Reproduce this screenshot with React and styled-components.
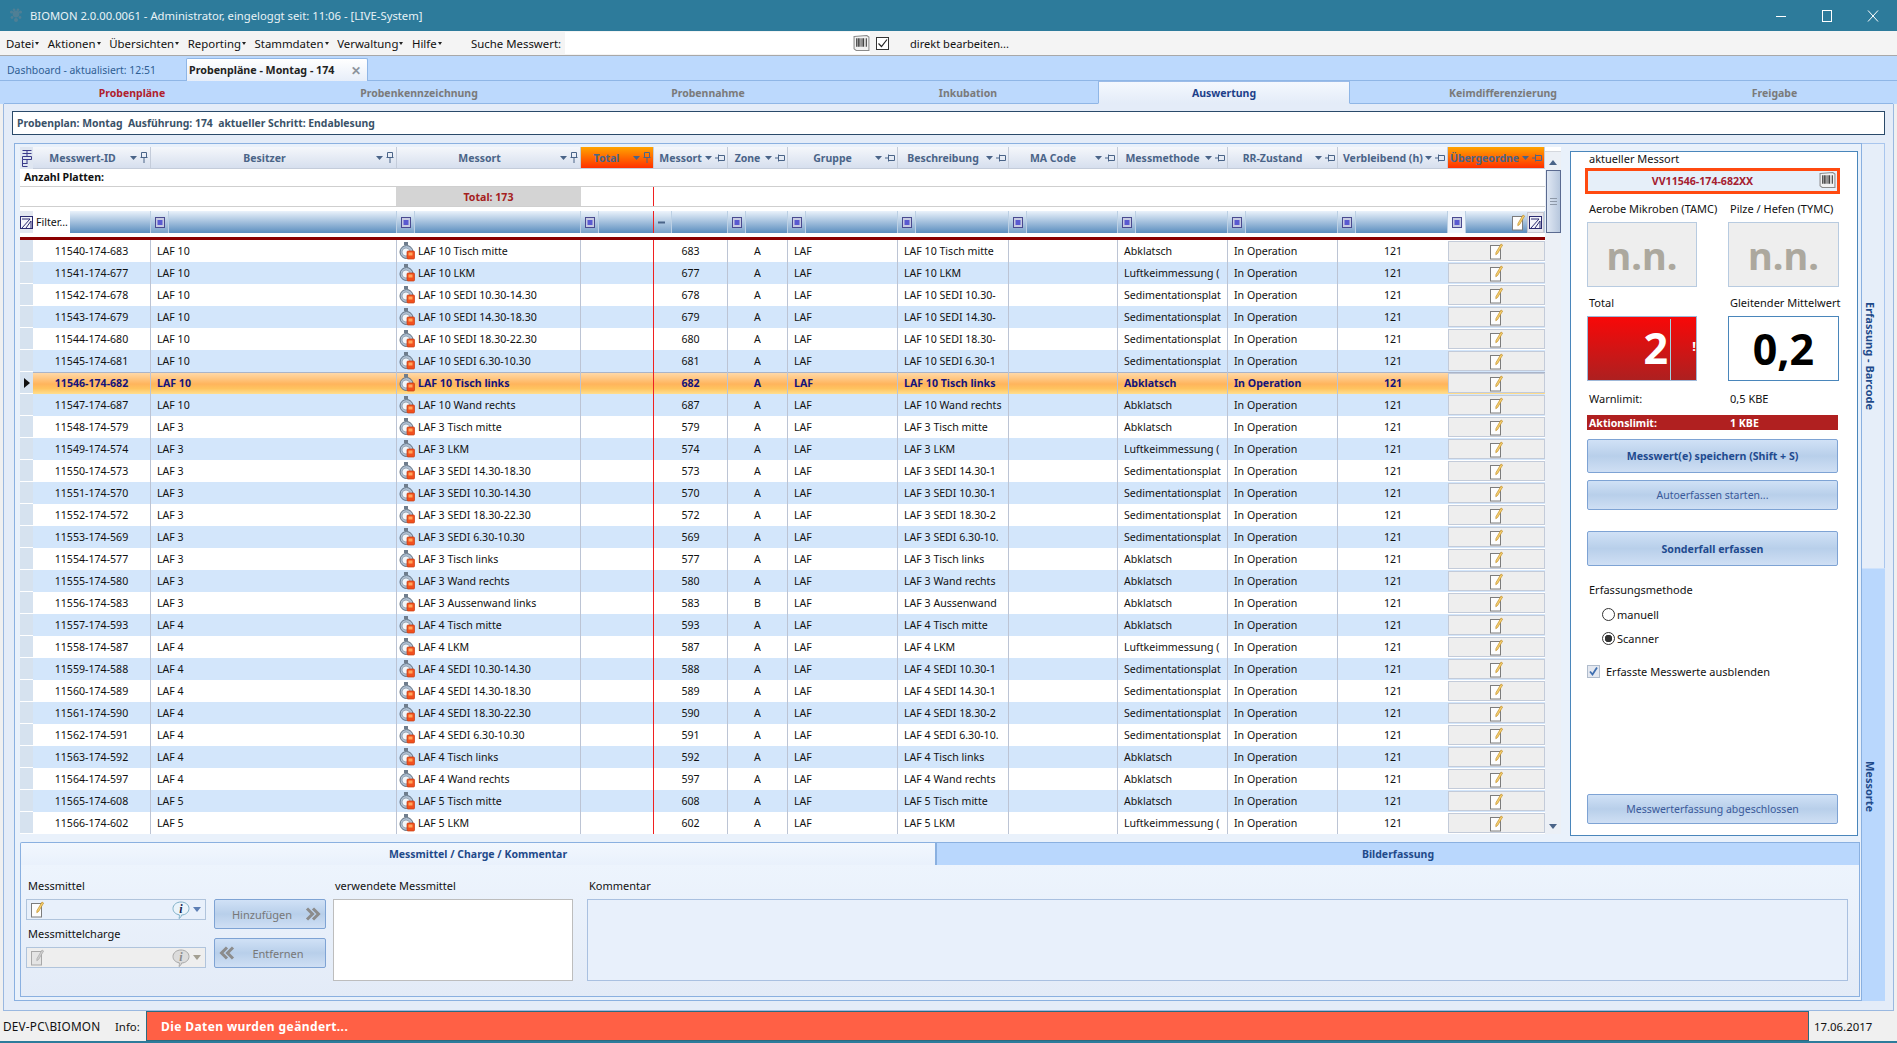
import styled, { createGlobalStyle } from "styled-components";

const UI_FONT = '"Noto Sans", "Liberation Sans", Arial, sans-serif';
const COLS = "13px 118px 246px 184px 73px 74px 60px 110px 111px 109px 110px 110px 110px 97px";

const METHODS = { T: "Abklatsch", L: "Luftkeimmessung (", S: "Sedimentationsplat" };

// id, besitzer, messort, nummer, zone, beschreibung, methode
const MESSWERTE = [
  ["11540-174-683", "LAF 10", "LAF 10 Tisch mitte", "683", "A", "LAF 10 Tisch mitte", "T"],
  ["11541-174-677", "LAF 10", "LAF 10 LKM", "677", "A", "LAF 10 LKM", "L"],
  ["11542-174-678", "LAF 10", "LAF 10 SEDI 10.30-14.30", "678", "A", "LAF 10 SEDI 10.30-", "S"],
  ["11543-174-679", "LAF 10", "LAF 10 SEDI 14.30-18.30", "679", "A", "LAF 10 SEDI 14.30-", "S"],
  ["11544-174-680", "LAF 10", "LAF 10 SEDI 18.30-22.30", "680", "A", "LAF 10 SEDI 18.30-", "S"],
  ["11545-174-681", "LAF 10", "LAF 10 SEDI 6.30-10.30", "681", "A", "LAF 10 SEDI 6.30-1", "S"],
  ["11546-174-682", "LAF 10", "LAF 10 Tisch links", "682", "A", "LAF 10 Tisch links", "T"],
  ["11547-174-687", "LAF 10", "LAF 10 Wand rechts", "687", "A", "LAF 10 Wand rechts", "T"],
  ["11548-174-579", "LAF 3", "LAF 3 Tisch mitte", "579", "A", "LAF 3 Tisch mitte", "T"],
  ["11549-174-574", "LAF 3", "LAF 3 LKM", "574", "A", "LAF 3 LKM", "L"],
  ["11550-174-573", "LAF 3", "LAF 3 SEDI 14.30-18.30", "573", "A", "LAF 3 SEDI 14.30-1", "S"],
  ["11551-174-570", "LAF 3", "LAF 3 SEDI 10.30-14.30", "570", "A", "LAF 3 SEDI 10.30-1", "S"],
  ["11552-174-572", "LAF 3", "LAF 3 SEDI 18.30-22.30", "572", "A", "LAF 3 SEDI 18.30-2", "S"],
  ["11553-174-569", "LAF 3", "LAF 3 SEDI 6.30-10.30", "569", "A", "LAF 3 SEDI 6.30-10.", "S"],
  ["11554-174-577", "LAF 3", "LAF 3 Tisch links", "577", "A", "LAF 3 Tisch links", "T"],
  ["11555-174-580", "LAF 3", "LAF 3 Wand rechts", "580", "A", "LAF 3 Wand rechts", "T"],
  ["11556-174-583", "LAF 3", "LAF 3 Aussenwand links", "583", "B", "LAF 3 Aussenwand", "T"],
  ["11557-174-593", "LAF 4", "LAF 4 Tisch mitte", "593", "A", "LAF 4 Tisch mitte", "T"],
  ["11558-174-587", "LAF 4", "LAF 4 LKM", "587", "A", "LAF 4 LKM", "L"],
  ["11559-174-588", "LAF 4", "LAF 4 SEDI 10.30-14.30", "588", "A", "LAF 4 SEDI 10.30-1", "S"],
  ["11560-174-589", "LAF 4", "LAF 4 SEDI 14.30-18.30", "589", "A", "LAF 4 SEDI 14.30-1", "S"],
  ["11561-174-590", "LAF 4", "LAF 4 SEDI 18.30-22.30", "590", "A", "LAF 4 SEDI 18.30-2", "S"],
  ["11562-174-591", "LAF 4", "LAF 4 SEDI 6.30-10.30", "591", "A", "LAF 4 SEDI 6.30-10.", "S"],
  ["11563-174-592", "LAF 4", "LAF 4 Tisch links", "592", "A", "LAF 4 Tisch links", "T"],
  ["11564-174-597", "LAF 4", "LAF 4 Wand rechts", "597", "A", "LAF 4 Wand rechts", "T"],
  ["11565-174-608", "LAF 5", "LAF 5 Tisch mitte", "608", "A", "LAF 5 Tisch mitte", "T"],
  ["11566-174-602", "LAF 5", "LAF 5 LKM", "602", "A", "LAF 5 LKM", "L"],
];

const COLUMNS = [
  { title: "Messwert-ID", pin: "v" },
  { title: "Besitzer", pin: "v" },
  { title: "Messort", pin: "v" },
  { title: "Total", pin: "v", hot: true },
  { title: "Messort", pin: "h" },
  { title: "Zone", pin: "h" },
  { title: "Gruppe", pin: "h" },
  { title: "Beschreibung", pin: "h" },
  { title: "MA Code", pin: "h" },
  { title: "Messmethode", pin: "h" },
  { title: "RR-Zustand", pin: "h" },
  { title: "Verbleibend (h)", pin: "h" },
  { title: "Übergeordne", pin: "h", hot: true },
];

const MENU = ["Datei", "Aktionen", "Übersichten", "Reporting", "Stammdaten", "Verwaltung", "Hilfe"];

const STEPS = [
  { label: "Probenpläne", width: 256, tone: "#b0202c" },
  { label: "Probenkennzeichnung", width: 318 },
  { label: "Probennahme", width: 260 },
  { label: "Inkubation", width: 260 },
  { label: "Auswertung", width: 252, active: true },
  { label: "Keimdifferenzierung", width: 306 },
  { label: "Freigabe", width: 237 },
];

const LogoIcon = () => (
  <svg width="14" height="16" viewBox="0 0 14 16">
    <g fill="#4f7f95">
      <circle cx="7" cy="6" r="3.4" />
      <circle cx="2.5" cy="4" r="1.6" />
      <circle cx="11.5" cy="4" r="1.6" />
      <circle cx="5" cy="1.8" r="1.3" />
      <circle cx="9" cy="1.8" r="1.3" />
      <circle cx="3" cy="9.5" r="1.4" />
      <circle cx="11" cy="9.5" r="1.4" />
      <circle cx="7" cy="12" r="2" />
    </g>
  </svg>
);

const WindowIcon = ({ type }) => (
  <svg width="12" height="12" viewBox="0 0 12 12" fill="none" stroke="#fff" strokeWidth="1">
    {type === "min" && <path d="M1 6.5h10" />}
    {type === "max" && <rect x="1.5" y="0.5" width="9" height="11" />}
    {type === "close" && <path d="M1 .5l10 11M11 .5L1 11.5" />}
  </svg>
);

const BarcodeIcon = ({ size = 17 }) => (
  <svg width={size} height={size} viewBox="0 0 16 16">
    <path d="M1 1.5l12-1 2 1.5v12.5H3l-2-1.5z" fill="#f2f2f2" stroke="#8a8a8a" />
    <path d="M3.5 3v8M5 3v8M6.5 3v8M8.5 3v8M10 3v8M12.5 3v8" stroke="#333" strokeWidth="1" />
  </svg>
);

const SortArrow = () => (
  <svg width="7" height="4" viewBox="0 0 7 4">
    <path d="M0 0h7L3.5 4z" fill="#4a6488" />
  </svg>
);

const PinIcon = ({ dir }) =>
  dir === "v" ? (
    <svg width="8" height="11" viewBox="0 0 8 11" fill="none" stroke="#4a6488">
      <path d="M1.5.5h5v5h-5zM.5 5.5h7M4 6v5" />
    </svg>
  ) : (
    <svg width="10" height="8" viewBox="0 0 10 8" fill="none" stroke="#4a6488">
      <path d="M3.5 1.5h6v5h-6zM3.5.5v7M0 4h3.5" />
    </svg>
  );

const ColumnChooser = () => (
  <svg width="12" height="17" viewBox="0 0 12 17" fill="none" stroke="#3a3a8a">
    <path d="M1.5.5h9M6 .5v6M1.5 3.5h9M1.5 6.5h9v3h-9zM6 9.5v4M1.5 13.5h5M1.5 16.5h5M1.5 9.5v7" />
  </svg>
);

const FilterBox = () => (
  <svg width="10" height="11" viewBox="0 0 10 11">
    <rect x=".5" y=".5" width="9" height="10" fill="#c6cae2" stroke="#4a4a90" />
    <rect x="2.5" y="3" width="5" height="5" fill="#5a5ad0" />
  </svg>
);

const FilterDash = () => (
  <svg width="11" height="11" viewBox="0 0 11 11">
    <rect x="1" y="4.5" width="7" height="2" fill="#4a6488" />
  </svg>
);

const FilterOff = () => (
  <svg width="13" height="13" viewBox="0 0 13 13" fill="none">
    <rect x=".5" y=".5" width="12" height="12" fill="#f5f5fa" stroke="#2a2a70" />
    <path d="M2 3h8L2 12M6 12l5-7v7" stroke="#2a2a70" />
  </svg>
);

const EditIcon = ({ muted }) => (
  <svg width="16" height="17" viewBox="0 0 16 17">
    <rect x="1.5" y="2.5" width="10" height="13.5" fill={muted ? "#e4e4e4" : "#fdfdfd"} stroke={muted ? "#a8a8a8" : "#7c7c7c"} />
    <path d="M7 9.500l5-8.500 1.600 1L8.600 10.500l-1.800 1.200z" fill={muted ? "#cfcfcf" : "#f9d472"} stroke={muted ? "#a8a8a8" : "#c08d2a"} strokeWidth=".7" />
  </svg>
);

const PlaceIcon = () => (
  <svg width="17" height="18" viewBox="0 0 17 18">
    <rect x="5" y="0" width="4" height="3" fill="#6f7d8d" />
    <circle cx="7.500" cy="10" r="6.500" fill="#aebfd2" stroke="#5f6f80" />
    <circle cx="7" cy="10" r="4" fill="#f2f6fa" stroke="#7f90a2" strokeWidth=".7" />
    <rect x="8" y="9" width="7.500" height="8" rx="1" fill="#f2501e" stroke="#c43d12" strokeWidth=".7" />
    <rect x="9.500" y="10.500" width="4" height="3" fill="#ffa45a" />
  </svg>
);

const InfoBubble = ({ muted }) => (
  <svg width="18" height="18" viewBox="0 0 18 18">
    <path d="M9 1c4.500 0 8 2.800 8 6.500S13.500 14 9.500 14c-.3 1.500-1 2.800-2.500 3.500.5-1.200.5-2.500.3-3.700C3.500 13.200 1 10.800 1 7.500 1 3.800 4.500 1 9 1z" fill={muted ? "#dcdcdc" : "#eaf4fb"} stroke={muted ? "#a8a8a8" : "#7fb0c8"} />
    <text x="9" y="12" textAnchor="middle" fontFamily="Liberation Serif, serif" fontStyle="italic" fontWeight="700" fontSize="12" fill={muted ? "#8a8a8a" : "#16264f"}>i</text>
  </svg>
);

const ComboArrow = ({ muted }) => (
  <svg width="8" height="5" viewBox="0 0 8 5">
    <path d="M0 0h8L4 5z" fill={muted ? "#a39f92" : "#5d7fb5"} />
  </svg>
);

const Chevrons = ({ left }) => (
  <svg width="16" height="14" viewBox="0 0 16 14" fill="none" stroke="#8c8c8c" strokeWidth="3">
    <path d={left ? "M8 1.500L2.500 7 8 12.500M14 1.500L8.500 7l5.500 5.500" : "M2 1.500L7.500 7 2 12.500M8 1.500L13.500 7 8 12.500"} />
  </svg>
);

const CheckMark = () => (
  <svg width="11" height="11" viewBox="0 0 11 11" fill="none" stroke="#3f6fb0" strokeWidth="1.800">
    <path d="M2 5.500l2.500 3L9 1.500" />
  </svg>
);

const App = () => {
  return (
    <>
      <GlobalStyle />
      <Window>
        <TitleBar>
          <LogoIcon />
          <TitleText>BIOMON 2.0.00.0061 - Administrator, eingeloggt seit: 11:06 - [LIVE-System]</TitleText>
          <WindowButtons>
            <WindowIcon type="min" />
            <WindowIcon type="max" />
            <WindowIcon type="close" />
          </WindowButtons>
        </TitleBar>

        <MenuBar>
          <MenuItems>
            {MENU.map(item => (
              <MenuItem key={item}>{item}</MenuItem>
            ))}
          </MenuItems>
          <SearchLabel>Suche Messwert:</SearchLabel>
          <SearchInput>
            <BarcodeIcon />
          </SearchInput>
          <PlainCheck>
            <svg width="11" height="11" viewBox="0 0 11 11" fill="none" stroke="#222" strokeWidth="1.200">
              <path d="M1.500 5.500l3 3L10 1.500" />
            </svg>
          </PlainCheck>
          <EditLabel>direkt bearbeiten...</EditLabel>
        </MenuBar>

        <DocTabs>
          <DocTab>Dashboard - aktualisiert: 12:51</DocTab>
          <ActiveDocTab>
            Probenpläne - Montag - 174
            <CloseMark>✕</CloseMark>
          </ActiveDocTab>
        </DocTabs>

        <StepTabs>
          {STEPS.map(step => (
            <StepTab key={step.label} $width={step.width} $active={step.active} $tone={step.tone}>
              {step.label}
            </StepTab>
          ))}
        </StepTabs>

        <Content>
          <InfoBox>Probenplan: Montag&nbsp; Ausführung: 174&nbsp; aktueller Schritt: Endablesung</InfoBox>
          <Workspace>
            <Frame>
              <TopArea>
                <GridFrame>
                  <GridBody>
                    <HeaderRow>
                      <SelectorHead>
                        <ColumnChooser />
                      </SelectorHead>
                      {COLUMNS.map((col, i) => (
                        <HeaderCell key={i} $hot={col.hot}>
                          <HeaderTitle>{col.title}</HeaderTitle>
                          <SortArrow />
                          <PinIcon dir={col.pin} />
                        </HeaderCell>
                      ))}
                    </HeaderRow>
                    <SummaryRow>Anzahl Platten:</SummaryRow>
                    <TotalRow>
                      <TotalBlank />
                      <TotalCell>Total: 173</TotalCell>
                      <TotalEnd />
                    </TotalRow>
                    <FilterRow>
                      <FilterSelector>
                        <FilterOff />
                      </FilterSelector>
                      {COLUMNS.map((col, i) => (
                        <FilterCell key={i} $red={i === 3}>
                          {i === 0 ? (
                            <FilterText>Filter...</FilterText>
                          ) : (
                            <FilterSlot $light={i === 12}>{i === 4 ? <FilterDash /> : <FilterBox />}</FilterSlot>
                          )}
                          {i === 12 && (
                            <FilterTools>
                              <EditIcon />
                              <FilterToolBox>
                                <FilterOff />
                              </FilterToolBox>
                            </FilterTools>
                          )}
                        </FilterCell>
                      ))}
                    </FilterRow>
                    <RedLine />
                    {MESSWERTE.map((m, i) => {
                      const selected = i === 6;
                      return (
                        <DataRow key={m[0]} $selected={selected} $odd={i % 2 === 1}>
                          <RowSelector>{selected && <RowMarker />}</RowSelector>
                          <Cell $center>{m[0]}</Cell>
                          <Cell>{m[1]}</Cell>
                          <Cell $icon>
                            <PlaceIcon />
                            {m[2]}
                          </Cell>
                          <Cell $red />
                          <Cell $center>{m[3]}</Cell>
                          <Cell $center>{m[4]}</Cell>
                          <Cell>LAF</Cell>
                          <Cell>{m[5]}</Cell>
                          <Cell />
                          <Cell>{METHODS[m[6]]}</Cell>
                          <Cell>In Operation</Cell>
                          <Cell $center $none>121</Cell>
                          <EditCell>
                            <EditIcon />
                          </EditCell>
                        </DataRow>
                      );
                    })}
                  </GridBody>
                  <ScrollBar>
                    <ScrollCap />
                    <ScrollUp />
                    <ScrollThumb>
                      <ThumbGrip />
                    </ScrollThumb>
                    <ScrollDown />
                  </ScrollBar>
                </GridFrame>

                <SidePanel>
                  <PanelLabel>aktueller Messort</PanelLabel>
                  <BarcodeField>
                    VV11546-174-682XX
                    <BarcodeSpot>
                      <BarcodeIcon />
                    </BarcodeSpot>
                  </BarcodeField>
                  <PairLabels $top={8}>
                    <span>Aerobe Mikroben (TAMC)</span>
                    <span>Pilze / Hefen (TYMC)</span>
                  </PairLabels>
                  <PairBoxes>
                    <EmptyValue>n.n.</EmptyValue>
                    <EmptyValue>n.n.</EmptyValue>
                  </PairBoxes>
                  <PairLabels $top={9}>
                    <span>Total</span>
                    <span>Gleitender Mittelwert</span>
                  </PairLabels>
                  <PairBoxes>
                    <TotalValue>
                      <TotalDigit>2</TotalDigit>
                      <TotalCursor />
                      <TotalBang>!</TotalBang>
                    </TotalValue>
                    <MeanValue>0,2</MeanValue>
                  </PairBoxes>
                  <PairLabels $top={11}>
                    <span>Warnlimit:</span>
                    <span>0,5 KBE</span>
                  </PairLabels>
                  <ActionLimit>
                    <span>Aktionslimit:</span>
                    <span>1 KBE</span>
                  </ActionLimit>
                  <SideButton $top={9} $height={34} $strong>Messwert(e) speichern (Shift + S)</SideButton>
                  <SideButton $top={7} $height={30}>Autoerfassen starten...</SideButton>
                  <SideButton $top={21} $height={35} $strong>Sonderfall erfassen</SideButton>
                  <MethodLabel>Erfassungsmethode</MethodLabel>
                  <RadioRow $top={10}>
                    <Radio />
                    manuell
                  </RadioRow>
                  <RadioRow $top={10}>
                    <Radio $checked />
                    Scanner
                  </RadioRow>
                  <CheckRow>
                    <CheckBox>
                      <CheckMark />
                    </CheckBox>
                    Erfasste Messwerte ausblenden
                  </CheckRow>
                  <FinishButton>Messwerterfassung abgeschlossen</FinishButton>
                </SidePanel>
              </TopArea>

              <BottomTabs>
                <BottomHead>
                  <BottomTab $active>Messmittel / Charge / Kommentar</BottomTab>
                  <BottomTab>Bilderfassung</BottomTab>
                </BottomHead>
                <BottomPanel>
                  <ComboColumn>
                    <FieldLabel>Messmittel</FieldLabel>
                    <Combo>
                      <EditIcon />
                      <ComboEnd>
                        <InfoBubble />
                        <ComboArrow />
                      </ComboEnd>
                    </Combo>
                    <FieldLabel $top={7}>Messmittelcharge</FieldLabel>
                    <Combo $disabled>
                      <EditIcon muted />
                      <ComboEnd>
                        <InfoBubble muted />
                        <ComboArrow muted />
                      </ComboEnd>
                    </Combo>
                  </ComboColumn>
                  <ButtonColumn>
                    <MoveButton>
                      <MoveLabel>Hinzufügen</MoveLabel>
                      <Chevrons />
                    </MoveButton>
                    <MoveButton>
                      <Chevrons left />
                      <MoveLabel>Entfernen</MoveLabel>
                    </MoveButton>
                  </ButtonColumn>
                  <UsedColumn>
                    <FieldLabel>verwendete Messmittel</FieldLabel>
                    <UsedList />
                  </UsedColumn>
                  <CommentColumn>
                    <FieldLabel>Kommentar</FieldLabel>
                    <CommentBox />
                  </CommentColumn>
                </BottomPanel>
              </BottomTabs>
            </Frame>

            <SideTabs>
              <SideTab $light>Erfassung - Barcode</SideTab>
              <SideTab $grow>Messorte</SideTab>
            </SideTabs>
          </Workspace>
        </Content>

        <StatusBar>
          <StatusUser>DEV-PC\BIOMON</StatusUser>
          <StatusInfo>Info:</StatusInfo>
          <StatusMessage>Die Daten wurden geändert...</StatusMessage>
          <StatusDate>17.06.2017</StatusDate>
        </StatusBar>
      </Window>
    </>
  );
};

const GlobalStyle = createGlobalStyle`
  html, body {
    margin: 0;
    padding: 0;
    background: #2d7b9b;
  }
  * {
    box-sizing: border-box;
  }
`;

const Window = styled.div`
  width: 1897px;
  height: 1043px;
  display: flex;
  flex-direction: column;
  overflow: hidden;
  font-family: ${UI_FONT};
  font-size: 10.6px;
  color: #111;
  background: #f0f0f0;
  border-bottom: 2px solid #2d7b9b;
`;

const TitleBar = styled.div`
  height: 31px;
  flex: none;
  display: flex;
  align-items: center;
  padding-left: 9px;
  background: #2d7b9b;
`;

const TitleText = styled.div`
  margin-left: 7px;
  font-size: 11.25px;
  color: #e8f2f6;
`;

const WindowButtons = styled.div`
  margin-left: auto;
  display: flex;
  gap: 34px;
  padding-right: 18px;
`;

const MenuBar = styled.div`
  height: 25px;
  flex: none;
  display: flex;
  align-items: center;
  padding-left: 6px;
  background: #f4f4f4;
  border-bottom: 1px solid #a8a8a8;
  font-size: 11.4px;
`;

const MenuItems = styled.div`
  display: flex;
  gap: 7.6px;
  width: 465px;
`;

const MenuItem = styled.div`
  position: relative;
  padding-right: 6px;
  &::after {
    content: "";
    position: absolute;
    right: 1px;
    top: 6px;
    border-left: 2.5px solid transparent;
    border-right: 2.5px solid transparent;
    border-top: 3px solid #222;
  }
`;

const SearchLabel = styled.div`
  width: 94px;
`;

const SearchInput = styled.div`
  width: 305px;
  height: 22px;
  display: flex;
  align-items: center;
  justify-content: flex-end;
  background: #fff;
`;

const PlainCheck = styled.div`
  width: 13px;
  height: 13px;
  margin-left: 6px;
  display: flex;
  align-items: center;
  justify-content: center;
  background: #fff;
  border: 1px solid #333;
`;

const EditLabel = styled.div`
  margin-left: 21px;
  font-size: 11.1px;
`;

const DocTabs = styled.div`
  height: 25px;
  flex: none;
  display: flex;
  align-items: flex-end;
  padding-left: 7px;
  background: #bcd9fd;
  border-bottom: 1px solid #8fb6e6;
`;

const DocTab = styled.div`
  width: 179px;
  height: 21px;
  line-height: 22px;
  color: #2e5d93;
  font-size: 10.4px;
`;

const ActiveDocTab = styled.div`
  width: 182px;
  height: 23px;
  position: relative;
  top: 1px;
  display: flex;
  align-items: center;
  padding-left: 2px;
  font-size: 10.7px;
  font-weight: 700;
  color: #222;
  background: linear-gradient(#ffffff, #e7eef9);
  border: 1px solid #8fb6e6;
  border-bottom: none;
  border-radius: 2px 2px 0 0;
`;

const CloseMark = styled.span`
  position: absolute;
  right: 6px;
  top: 3px;
  color: #8d949c;
  font-size: 12px;
  font-weight: 700;
`;

const StepTabs = styled.div`
  height: 23px;
  flex: none;
  display: flex;
  padding-left: 4px;
  background: #bcd9fd;
`;

const StepTab = styled.div`
  width: ${props => props.$width}px;
  display: flex;
  align-items: center;
  justify-content: center;
  padding-top: 1px;
  font-weight: 700;
  font-size: 10.5px;
  color: ${props => (props.$active ? "#1d3f8a" : props.$tone || "#7a7a7a")};
  background: ${props => (props.$active ? "linear-gradient(#f4f8fe, #e4ecf8)" : "transparent")};
  border-bottom: 1px solid ${props => (props.$active ? "#e4ecf8" : "#8fb6e6")};
  ${props => props.$active && "border-left: 1px solid #8fb6e6; border-right: 1px solid #8fb6e6; border-top: 1px solid #9bbbe8;"}
`;

const Content = styled.div`
  flex: 1;
  min-height: 0;
  display: flex;
  flex-direction: column;
  margin: 0 3px;
  padding: 7px 8px 9px;
  background: #e4ecf8;
  border-left: 1px solid #9ab8e0;
  border-right: 1px solid #9ab8e0;
  border-bottom: 1px solid #9ab8e0;
`;

const InfoBox = styled.div`
  height: 24px;
  flex: none;
  line-height: 22px;
  padding-left: 4px;
  background: #fff;
  border: 1px solid #2a4a6a;
  font-size: 10.4px;
  font-weight: 700;
  color: #3a5268;
`;

const Workspace = styled.div`
  flex: 1;
  min-height: 0;
  display: flex;
  margin: 8px 0 0 2px;
`;

const Frame = styled.div`
  width: 1848px;
  display: flex;
  flex-direction: column;
  padding: 3px 3px 3px 5px;
  background: #e9f1fb;
  border: 1px solid #8ab0e0;
`;

const TopArea = styled.div`
  flex: 1;
  min-height: 0;
  display: flex;
  gap: 9px;
`;

const GridFrame = styled.div`
  width: 1541px;
  height: 687px;
  display: flex;
  background: #fff;
`;

const GridBody = styled.div`
  width: 1525px;
  display: flex;
  flex-direction: column;
`;

const HeaderRow = styled.div`
  height: 22px;
  display: grid;
  grid-template-columns: ${COLS};
`;

const SelectorHead = styled.div`
  display: flex;
  align-items: center;
  justify-content: center;
  background: #dfe6f1;
  overflow: hidden;
`;

const HeaderCell = styled.div`
  display: flex;
  align-items: center;
  gap: 3px;
  padding: 0 2px 0 ${props => (props.$hot ? "2px" : "5px")};
  overflow: hidden;
  background: ${props => (props.$hot ? "linear-gradient(#ffa400, #ff3000)" : "linear-gradient(#f5f7fb, #d6dfee)")};
  border-right: 1px solid #c4ccda;
  border-bottom: 1px solid #c4ccda;
`;

const HeaderTitle = styled.div`
  flex: 1;
  min-width: 0;
  text-align: center;
  white-space: nowrap;
  font-size: 10.5px;
  font-weight: 700;
  color: #4a6488;
`;

const SummaryRow = styled.div`
  height: 18px;
  line-height: 16px;
  padding-left: 4px;
  font-weight: 700;
  color: #111;
  border-bottom: 1px solid #cfcfcf;
`;

const TotalRow = styled.div`
  height: 20px;
  display: flex;
  border-bottom: 1px solid #cfcfcf;
`;

const TotalBlank = styled.div`
  width: 376px;
`;

const TotalCell = styled.div`
  width: 185px;
  display: flex;
  align-items: center;
  justify-content: center;
  background: #d4d4d4;
  font-weight: 700;
  color: #a52020;
`;

const TotalEnd = styled.div`
  width: 73px;
  border-right: 1px solid #f02020;
`;

const FilterRow = styled.div`
  height: 22px;
  margin-top: 4px;
  display: grid;
  grid-template-columns: ${COLS};
  background: linear-gradient(#eaf2fb, #5b8ebf);
`;

const FilterSelector = styled.div`
  display: flex;
  align-items: center;
  justify-content: center;
  overflow: hidden;
  background: #e4e8f0;
`;

const FilterCell = styled.div`
  display: flex;
  align-items: stretch;
  justify-content: space-between;
  border-right: 1px solid ${props => (props.$red ? "#f02020" : "#bcd0e4")};
`;

const FilterText = styled.div`
  width: 37px;
  display: flex;
  align-items: center;
  padding-left: 3px;
  background: #fff;
  color: #111;
`;

const FilterSlot = styled.div`
  width: 18px;
  display: flex;
  align-items: center;
  justify-content: center;
  background: ${props => (props.$light ? "#eef4fb" : "rgba(255, 255, 255, 0.18)")};
  border-right: 1px solid #bcd0e4;
`;

const FilterTools = styled.div`
  display: flex;
  align-items: center;
`;

const FilterToolBox = styled.div`
  width: 17px;
  height: 21px;
  display: flex;
  align-items: center;
  justify-content: center;
  background: #e8e8ee;
  border: 1px solid #c6c6d0;
`;

const RedLine = styled.div`
  height: 3px;
  margin-top: 4px;
  background: #8b0000;
`;

const DataRow = styled.div`
  height: 22px;
  display: grid;
  grid-template-columns: ${COLS};
  background: ${props =>
    props.$selected
      ? "linear-gradient(#ffdcae 0%, #ffb45c 55%, #ffc35f 75%, #ffde8e 100%)"
      : props.$odd
        ? "#d3e6fb"
        : "#fff"};
  ${props => props.$selected && "font-weight: 700; color: #14147a; box-shadow: inset 0 1px 0 #aab4c8;"}
`;

const RowSelector = styled.div`
  display: flex;
  align-items: center;
  justify-content: center;
  background: #d6e2ef;
  border-bottom: 1px solid #fff;
`;

const RowMarker = styled.div`
  border-top: 5px solid transparent;
  border-bottom: 5px solid transparent;
  border-left: 6px solid #111;
`;

const Cell = styled.div`
  display: flex;
  align-items: center;
  gap: 2px;
  min-width: 0;
  overflow: hidden;
  white-space: nowrap;
  justify-content: ${props => (props.$center ? "center" : "flex-start")};
  padding-left: ${props => (props.$center ? "0" : props.$icon ? "2px" : "6px")};
  border-right: ${props => (props.$none ? "none" : `1px solid ${props.$red ? "#f02020" : "#bcc4d4"}`)};
`;

const EditCell = styled.div`
  margin: 1px 0;
  display: flex;
  align-items: center;
  justify-content: center;
  background: #eeeeee;
  border: 1px solid #c3cbd9;
`;

const ScrollBar = styled.div`
  width: 16px;
  display: flex;
  flex-direction: column;
  align-items: center;
  background: #ecf0f6;
`;

const ScrollCap = styled.div`
  width: 100%;
  height: 5px;
  background: #fff;
  border-bottom: 1px solid #d5d8de;
`;

const ScrollUp = styled.div`
  margin-top: 8px;
  border-left: 4px solid transparent;
  border-right: 4px solid transparent;
  border-bottom: 5px solid #4a6488;
`;

const ScrollThumb = styled.div`
  width: 15px;
  height: 63px;
  margin-top: 5px;
  display: flex;
  align-items: center;
  justify-content: center;
  background: linear-gradient(90deg, #dfe7f3, #b7c7dd);
  border: 1px solid #5a6a90;
`;

const ThumbGrip = styled.div`
  width: 7px;
  height: 7px;
  background: repeating-linear-gradient(#8d98a8 0 1px, transparent 1px 3px);
`;

const ScrollDown = styled.div`
  margin-top: auto;
  margin-bottom: 5px;
  border-left: 4px solid transparent;
  border-right: 4px solid transparent;
  border-top: 5px solid #4a6488;
`;

const SidePanel = styled.div`
  width: 288px;
  margin-top: 4px;
  display: flex;
  flex-direction: column;
  padding: 0 19px 11px 16px;
  background: #fff;
  border: 1px solid #4a86bb;
`;

const PanelLabel = styled.div`
  height: 14px;
  line-height: 14px;
  padding-left: 2px;
  font-size: 11px;
`;

const BarcodeField = styled.div`
  position: relative;
  width: 255px;
  height: 26px;
  margin: 2px 0 0 -2px;
  display: flex;
  align-items: center;
  justify-content: center;
  padding-right: 20px;
  background: #e6eff9;
  border: 3px solid #ff4a10;
  font-weight: 700;
  color: #a52030;
`;

const BarcodeSpot = styled.span`
  position: absolute;
  right: 1px;
  top: 1px;
  display: flex;
`;

const PairLabels = styled.div`
  height: 14px;
  line-height: 14px;
  margin-top: ${props => props.$top}px;
  display: grid;
  grid-template-columns: 141px 111px;
  padding-left: 2px;
  font-size: 11px;
  white-space: nowrap;
`;

const PairBoxes = styled.div`
  height: 65px;
  margin-top: 6px;
  display: grid;
  grid-template-columns: 110px 111px;
  column-gap: 31px;
`;

const EmptyValue = styled.div`
  display: flex;
  align-items: center;
  justify-content: center;
  background: #eeeeee;
  border: 1px solid #b8cbe0;
  font-size: 38px;
  font-weight: 700;
  color: #aca89e;
`;

const TotalValue = styled.div`
  position: relative;
  background: linear-gradient(#f80808, #ad2020);
  border: 1px solid #9fb8d8;
`;

const TotalDigit = styled.div`
  position: absolute;
  right: 28px;
  top: 6px;
  font-size: 43px;
  font-weight: 700;
  line-height: 50px;
  color: #fff;
`;

const TotalCursor = styled.div`
  position: absolute;
  left: 82px;
  top: 2px;
  bottom: 0;
  width: 1px;
  background: #9fd2e0;
`;

const TotalBang = styled.div`
  position: absolute;
  right: 0;
  top: 20px;
  font-size: 13px;
  font-weight: 700;
  color: #fff;
`;

const MeanValue = styled.div`
  display: flex;
  align-items: center;
  justify-content: center;
  background: #fff;
  border: 1px solid #4a86bb;
  font-size: 43px;
  font-weight: 700;
  color: #000;
`;

const ActionLimit = styled.div`
  height: 15px;
  margin-top: 9px;
  display: grid;
  grid-template-columns: 141px 111px;
  align-items: center;
  padding-left: 2px;
  background: #b02020;
  color: #fff;
  font-weight: 700;
`;

const SideButton = styled.div`
  flex: none;
  height: ${props => props.$height}px;
  margin-top: ${props => props.$top}px;
  display: flex;
  align-items: center;
  justify-content: center;
  background: linear-gradient(#d0e1f6, #b8cfea 50%, #cfdff4);
  border: 1px solid #7ea3d4;
  border-radius: 2px;
  font-size: ${props => (props.$strong ? "10.6px" : "10.5px")};
  font-weight: ${props => (props.$strong ? 700 : 400)};
  color: ${props => (props.$strong ? "#1f4a8f" : "#3a5a9a")};
`;

const MethodLabel = styled.div`
  height: 14px;
  line-height: 14px;
  margin-top: 17px;
  padding-left: 2px;
  font-size: 11px;
`;

const RadioRow = styled.div`
  height: 14px;
  margin: ${props => props.$top}px 0 0 15px;
  display: flex;
  align-items: center;
  gap: 2px;
  font-size: 11px;
`;

const Radio = styled.span`
  width: 13px;
  height: 13px;
  display: inline-block;
  border-radius: 50%;
  border: 1px solid #333;
  background: ${props => (props.$checked ? "radial-gradient(circle, #333 0 3.5px, #fff 4px)" : "#fff")};
`;

const CheckRow = styled.div`
  height: 14px;
  margin-top: 19px;
  display: flex;
  align-items: center;
  gap: 6px;
  font-size: 11px;
`;

const CheckBox = styled.span`
  width: 13px;
  height: 13px;
  display: flex;
  align-items: center;
  justify-content: center;
  background: #e4e8f0;
  border: 1px solid #b0bccc;
`;

const FinishButton = styled(SideButton).attrs({ $height: 30 })`
  margin-top: auto;
`;

const BottomTabs = styled.div`
  height: 155px;
  flex: none;
  margin: 6px -2px 0 0;
  display: flex;
  flex-direction: column;
`;

const BottomHead = styled.div`
  height: 23px;
  flex: none;
  display: grid;
  grid-template-columns: 916px 1fr;
`;

const BottomTab = styled.div`
  display: flex;
  align-items: center;
  justify-content: center;
  font-size: 10.5px;
  font-weight: 700;
  color: #1f4a8a;
  background: ${props => (props.$active ? "linear-gradient(#f2f7fe, #e9f1fc)" : "#b9d7fd")};
  border: 1px solid #8ab0e0;
  border-bottom: none;
  ${props => props.$active && "border-radius: 2px 0 0 0;"}
`;

const BottomPanel = styled.div`
  flex: 1;
  display: flex;
  padding: 14px 11px 0 5px;
  background: linear-gradient(#edf4fd, #e3ebf7);
  border: 1px solid #8ab0e0;
  border-top: none;
`;

const ComboColumn = styled.div`
  width: 180px;
`;

const FieldLabel = styled.div`
  height: 14px;
  line-height: 14px;
  margin-top: ${props => props.$top || 0}px;
  padding-left: 2px;
  font-size: 11px;
`;

const Combo = styled.div`
  height: 21px;
  margin-top: 6px;
  display: flex;
  align-items: center;
  justify-content: space-between;
  padding: 0 4px 0 3px;
  background: ${props => (props.$disabled ? "#eeeeee" : "#e8f0fb")};
  border: 1px solid #b0c4dc;
`;

const ComboEnd = styled.div`
  display: flex;
  align-items: center;
  gap: 3px;
`;

const ButtonColumn = styled.div`
  width: 112px;
  margin-left: 8px;
  padding-top: 20px;
  display: flex;
  flex-direction: column;
  gap: 9px;
`;

const MoveButton = styled.div`
  height: 30px;
  display: flex;
  align-items: center;
  padding: 0 4px;
  background: linear-gradient(#d0e1f6, #b8cfea 50%, #cfdff4);
  border: 1px solid #7ea3d4;
  border-radius: 2px;
  color: #777;
  font-size: 11px;
`;

const MoveLabel = styled.span`
  flex: 1;
  text-align: center;
`;

const UsedColumn = styled.div`
  width: 240px;
  margin-left: 7px;
`;

const UsedList = styled.div`
  height: 82px;
  margin-top: 6px;
  background: #fff;
  border: 1px solid #bdbdbd;
`;

const CommentColumn = styled.div`
  flex: 1;
  margin-left: 14px;
`;

const CommentBox = styled.div`
  height: 82px;
  margin-top: 6px;
  background: #e8f0fb;
  border: 1px solid #a9c0e0;
`;

const SideTabs = styled.div`
  width: 23px;
  display: flex;
  flex-direction: column;
`;

const SideTab = styled.div`
  height: ${props => (props.$grow ? "433px" : "425px")};
  display: flex;
  align-items: center;
  justify-content: center;
  writing-mode: vertical-rl;
  padding-right: 5px;
  ${props => props.$grow && "padding-top: 4px;"}
  font-size: 11px;
  font-weight: 700;
  color: #1f4a8a;
  background: ${props => (props.$light ? "#e6eef9" : "#b9d7fd")};
  border-right: 1px solid ${props => (props.$light ? "#a9c6ee" : "#b9d7fd")};
  border-top: 1px solid ${props => (props.$light ? "#a9c6ee" : "#cfe2fb")};
`;

const StatusBar = styled.div`
  height: 30px;
  flex: none;
  display: flex;
  align-items: center;
  background: #f0f0f0;
  font-size: 11.4px;
`;

const StatusUser = styled.div`
  width: 115px;
  padding-left: 3px;
  font-size: 11.8px;
  letter-spacing: 0.2px;
`;

const StatusInfo = styled.div`
  width: 31px;
`;

const StatusMessage = styled.div`
  width: 1663px;
  height: 100%;
  display: flex;
  align-items: center;
  padding-left: 14px;
  background: #ff6045;
  border: 1px solid #2d6a80;
  font-size: 12px;
  letter-spacing: 0.4px;
  font-weight: 700;
  color: #fff;
`;

const StatusDate = styled.div`
  padding-left: 5px;
`;

export default App;
